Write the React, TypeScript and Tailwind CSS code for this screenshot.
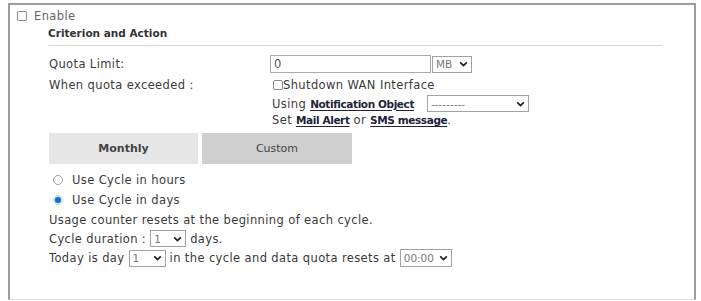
import React from "react";

const Chevron = () => (
  <svg width="9" height="6" viewBox="0 0 9 6" className="shrink-0">
    <path d="M1.2 1.3 L4.5 4.5 L7.8 1.3" fill="none" stroke="#1e1e1e" strokeWidth="1.7" />
  </svg>
);

const Select = ({ value, className }: { value: string; className: string }) => (
  <span
    className={`inline-flex h-[17px] items-center justify-between border border-[#a2a2a2] bg-white pl-[3px] pr-[3px] text-[10.5px] tracking-normal text-[#777] ${className}`}
  >
    <span>{value}</span>
    <Chevron />
  </span>
);

const Box = () => (
  <span className="inline-block h-[10px] w-[10px] shrink-0 rounded-[2px] border border-[#8c8c8c] bg-white" />
);

const linkClass = "text-[10.5px] font-bold tracking-[-0.4px] text-[#22223c] underline underline-offset-2";

const App = () => {
  return (
    <div
      className="h-[301px] w-[701px] bg-white pl-[8px] pt-[3px] text-[11.5px] leading-[14px] tracking-[0.38px] text-[#3a3a3a]"
      style={{ fontFamily: "'DejaVu Sans', Verdana, sans-serif" }}
    >
      <div className="h-[297px] w-[688px] border-2 border-b border-[#9c9c9c] border-b-[#e0e0e0] pt-[4px]">
        <div className="flex h-[14px] items-center gap-[7px] pl-[7px]">
          <Box />
          <span className="text-[#666]">Enable</span>
        </div>

        <div className="ml-[38px] w-[614px]">
          <div className="mt-[3px] border-b border-[#d6d6d6] pb-[5px] text-[10.5px] font-bold tracking-normal text-[#333]">
            Criterion and Action
          </div>

          <div className="mt-[9px] grid grid-cols-[222px_1fr]">
            <div className="flex h-[18px] items-center pl-[1px]">Quota Limit:</div>
            <div className="flex items-center gap-[1px]">
              <span className="flex h-[18px] w-[161px] items-center border border-[#aaaaaa] px-[3px] text-[#555]">0</span>
              <Select value="MB" className="h-[16px] w-[40px]" />
            </div>

            <div className="mt-[3px] flex h-[17px] items-center pl-[1px]">When quota exceeded :</div>
            <div className="mt-[3px] flex h-[17px] items-center pl-[3px]">
              <Box />
              <span>Shutdown WAN Interface</span>
            </div>

            <div />
            <div className="mt-[2px] flex h-[17px] items-center pl-[2px]">
              <span>Using&nbsp;</span>
              <span className={linkClass}>Notification Object</span>
              <Select value="---------" className="ml-[13px] w-[102px]" />
            </div>

            <div />
            <div className="flex h-[16px] items-center pl-[2px]">
              <span>Set&nbsp;</span>
              <span className={linkClass}>Mail Alert</span>
              <span>&nbsp;or&nbsp;</span>
              <span className={linkClass}>SMS message</span>
              <span>.</span>
            </div>
          </div>

          <div className="ml-[1px] mt-[5px] flex h-[31px] w-[303px] text-[11px] tracking-normal text-[#444]">
            <div className="flex w-[149px] items-center justify-center bg-[#e6e6e6] font-bold">Monthly</div>
            <div className="ml-[4px] flex flex-1 items-center justify-center bg-[#cfcfcf]">Custom</div>
          </div>

          <div className="mt-[8px] flex flex-col gap-[4px] pl-[5px]">
            <div className="flex h-[16px] items-center gap-[9px]">
              <span className="inline-block h-[10px] w-[10px] rounded-full border border-[#a0a0a0] bg-white" />
              <span>Use Cycle in hours</span>
            </div>
            <div className="flex h-[16px] items-center gap-[9px]">
              <span className="inline-block h-[10px] w-[10px] rounded-full border-[2px] border-[#c4def3] bg-[#1f6fbf]" />
              <span>Use Cycle in days</span>
            </div>
          </div>

          <div className="mt-[4px] flex flex-col gap-[2px] pl-[1px]">
            <div className="flex h-[16px] items-center">Usage counter resets at the beginning of each cycle.</div>
            <div className="flex h-[17px] items-center">
              <span>Cycle duration :&nbsp;</span>
              <Select value="1" className="w-[36px]" />
              <span>&nbsp;days.</span>
            </div>
            <div className="flex h-[18px] items-center">
              <span>Today is day&nbsp;</span>
              <Select value="1" className="w-[37px]" />
              <span>&nbsp;in the cycle and data quota resets at&nbsp;</span>
              <Select value="00:00" className="h-[18px] w-[52px]" />
            </div>
          </div>
        </div>
      </div>
    </div>
  );
};

export default App;
